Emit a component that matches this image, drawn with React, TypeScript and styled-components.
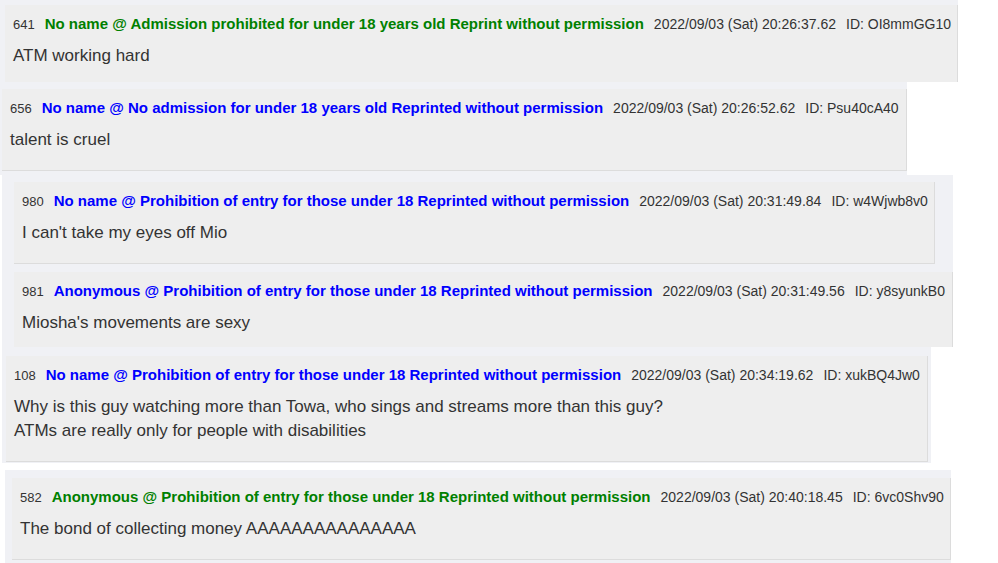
import React, { FunctionComponent } from 'react';
import styled, { createGlobalStyle } from 'styled-components';

const GlobalStyle = createGlobalStyle`
  body {
    margin: 0;
    background: #ffffff;
    font-family: 'Liberation Sans', Arial, sans-serif;
  }
`;

const Page = styled.div`
  display: flex;
  flex-direction: column;
  width: 998px;
  height: 563px;
  overflow: hidden;
`;

type StripProps = {
  $left: number;
  $width: number;
  $height: number;
  $top: number;
  $pad: number;
};

// each strip is a piece cut out of a thread page
const StripBox = styled.div<StripProps>`
  box-sizing: border-box;
  display: flex;
  flex-direction: column;
  gap: 8px;
  flex-shrink: 0;
  margin-left: ${(props) => props.$left}px;
  margin-top: ${(props) => props.$top}px;
  padding-top: ${(props) => props.$pad}px;
  width: ${(props) => props.$width}px;
  height: ${(props) => props.$height}px;
  overflow: hidden;
  background: #f0f1f5;
`;

type PostBoxProps = {
  $inset: number;
  $width: number;
};

const PostBox = styled.div<PostBoxProps>`
  box-sizing: border-box;
  flex-shrink: 0;
  margin-left: ${(props) => props.$inset}px;
  width: ${(props) => props.$width}px;
  padding: 8px 8px 18px;
  background: #eeeeee;
  border-right: 1px solid #dcdcdc;
  border-bottom: 1px solid #dcdcdc;
`;

const Header = styled.div`
  display: flex;
  align-items: baseline;
  gap: 10px;
  height: 22px;
  line-height: 22px;
  white-space: nowrap;
  color: #333333;
`;

const Number = styled.span`
  font-size: 13px;
`;

const Name = styled.span<{ $color: string }>`
  font-size: 15px;
  font-weight: bold;
  color: ${(props) => props.$color};
`;

const Meta = styled.span`
  font-size: 14px;
`;

const Body = styled.div`
  margin-top: 9px;
  font-size: 17px;
  line-height: 24px;
  color: #333333;
`;

type Post = {
  no: string;
  name: string;
  color: string;
  date: string;
  id: string;
  lines: string[];
  inset: number;
  width: number;
};

const GREEN = '#008000';
const BLUE = '#0000ff';

const PostView: FunctionComponent<{ post: Post }> = ({ post }) => (
  <PostBox $inset={post.inset} $width={post.width}>
    <Header>
      <Number>{post.no}</Number>
      <Name $color={post.color}>{post.name}</Name>
      <Meta>{post.date}</Meta>
      <Meta>ID: {post.id}</Meta>
    </Header>
    <Body>
      {post.lines.map((line) => (
        <div key={line}>{line}</div>
      ))}
    </Body>
  </PostBox>
);

type Strip = {
  left: number;
  width: number;
  height: number;
  top: number;
  pad: number;
  posts: Post[];
};

const strips: Strip[] = [
  {
    left: 0,
    width: 958,
    height: 82,
    top: 0,
    pad: 5,
    posts: [
      {
        no: '641',
        name: 'No name @ Admission prohibited for under 18 years old Reprint without permission',
        color: GREEN,
        date: '2022/09/03 (Sat) 20:26:37.62',
        id: 'OI8mmGG10',
        lines: ['ATM working hard'],
        inset: 5,
        width: 953,
      },
    ],
  },
  {
    left: 0,
    width: 907,
    height: 93,
    top: 0,
    pad: 7,
    posts: [
      {
        no: '656',
        name: 'No name @ No admission for under 18 years old Reprinted without permission',
        color: BLUE,
        date: '2022/09/03 (Sat) 20:26:52.62',
        id: 'Psu40cA40',
        lines: ['talent is cruel'],
        inset: 2,
        width: 905,
      },
    ],
  },
  {
    left: 2,
    width: 951,
    height: 172,
    top: 0,
    pad: 7,
    posts: [
      {
        no: '980',
        name: 'No name @ Prohibition of entry for those under 18 Reprinted without permission',
        color: BLUE,
        date: '2022/09/03 (Sat) 20:31:49.84',
        id: 'w4Wjwb8v0',
        lines: ["I can't take my eyes off Mio"],
        inset: 12,
        width: 921,
      },
      {
        no: '981',
        name: 'Anonymous @ Prohibition of entry for those under 18 Reprinted without permission',
        color: BLUE,
        date: '2022/09/03 (Sat) 20:31:49.56',
        id: 'y8syunkB0',
        lines: ["Miosha's movements are sexy"],
        inset: 12,
        width: 939,
      },
    ],
  },
  {
    left: 2,
    width: 929,
    height: 116,
    top: 0,
    pad: 9,
    posts: [
      {
        no: '108',
        name: 'No name @ Prohibition of entry for those under 18 Reprinted without permission',
        color: BLUE,
        date: '2022/09/03 (Sat) 20:34:19.62',
        id: 'xukBQ4Jw0',
        lines: [
          'Why is this guy watching more than Towa, who sings and streams more than this guy?',
          'ATMs are really only for people with disabilities',
        ],
        inset: 4,
        width: 922,
      },
    ],
  },
  {
    left: 5,
    width: 946,
    height: 93,
    top: 7,
    pad: 8,
    posts: [
      {
        no: '582',
        name: 'Anonymous @ Prohibition of entry for those under 18 Reprinted without permission',
        color: GREEN,
        date: '2022/09/03 (Sat) 20:40:18.45',
        id: '6vc0Shv90',
        lines: ['The bond of collecting money AAAAAAAAAAAAAAA'],
        inset: 7,
        width: 939,
      },
    ],
  },
];

const App: FunctionComponent = () => (
  <>
    <GlobalStyle />
    <Page>
      {strips.map((strip, index) => (
        <StripBox
          key={index}
          $left={strip.left}
          $width={strip.width}
          $height={strip.height}
          $top={strip.top}
          $pad={strip.pad}
        >
          {strip.posts.map((post) => (
            <PostView key={post.no} post={post} />
          ))}
        </StripBox>
      ))}
    </Page>
  </>
);

export default App;
